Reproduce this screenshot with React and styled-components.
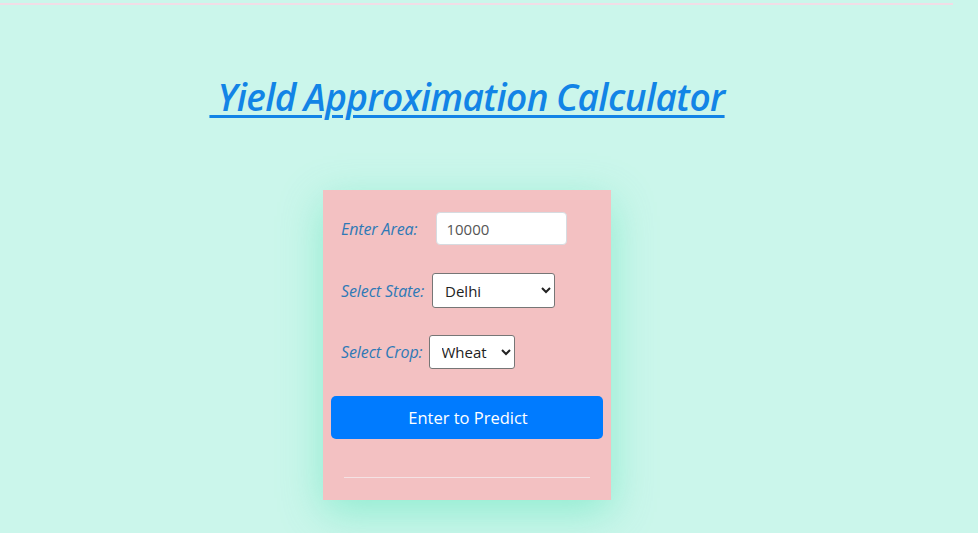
import React, { useState } from "react";
import styled, { createGlobalStyle } from "styled-components";

const GlobalStyle = createGlobalStyle`
  html, body {
    margin: 0;
    padding: 0;
    background: #cbf6eb;
  }
  body {
    font-family: "Open Sans", "Liberation Sans", sans-serif;
  }
`;

const Page = styled.div`
  width: 978px;
  height: 533px;
  background: #cbf6eb;
  overflow: hidden;
`;

const TopRule = styled.div`
  width: 953px;
  height: 2px;
  margin-top: 3px;
  background: #f1dde6;
`;

const Main = styled.main`
  width: 934px;
  display: flex;
  flex-direction: column;
  align-items: center;
`;

const Title = styled.h1`
  margin: 70px 0 0;
  font-family: "Open Sans", "Liberation Sans", sans-serif;
  font-style: italic;
  font-weight: 600;
  font-size: 37px;
  line-height: 44px;
  letter-spacing: -0.6px;
  word-spacing: -1px;
  color: #1284e6;
  text-decoration: underline;
  text-decoration-thickness: 3px;
  text-underline-offset: 4px;
  white-space: pre;
`;

const Card = styled.form`
  margin-top: 71px;
  width: 288px;
  box-sizing: border-box;
  background: #f3c1c2;
  padding: 22px 8px 22px;
  box-shadow: 0 12px 40px rgba(70, 225, 175, 0.45);
`;

const Row = styled.div`
  display: flex;
  align-items: center;
  gap: ${(p) => p.gap}px;
  padding-left: 10px;
  margin-bottom: ${(p) => p.mb}px;
`;

const Label = styled.label`
  font-family: "Open Sans", "Liberation Sans", sans-serif;
  font-style: italic;
  font-size: 16px;
  letter-spacing: -0.1px;
  color: #2e79b6;
`;

const TextInput = styled.input`
  width: 131px;
  height: 33px;
  box-sizing: border-box;
  border: 1px solid #d6dbe0;
  border-radius: 4px;
  padding: 0 9px;
  font-family: "Open Sans", "Liberation Sans", sans-serif;
  font-size: 15px;
  color: #555;
  background: #fff;
  outline: none;
`;

const Select = styled.select`
  width: ${(p) => p.w}px;
  height: ${(p) => p.h}px;
  box-sizing: border-box;
  border: 1px solid #767676;
  border-radius: 3px;
  padding: 0 8px;
  font-family: "Open Sans", "Liberation Sans", sans-serif;
  font-size: 15px;
  color: #222;
  background: #fff;
`;

const Button = styled.button`
  display: block;
  width: 100%;
  height: 43px;
  margin-top: 27px;
  border: none;
  border-radius: 5px;
  background: #007bff;
  color: #fff;
  font-family: "Open Sans", "Liberation Sans", sans-serif;
  font-weight: 500;
  font-size: 16.5px;
  padding-left: 8px;
  cursor: pointer;
`;

const Divider = styled.hr`
  margin: 38px 13px 0;
  border: none;
  border-top: 1px solid #f4e2e4;
`;

const states = ["Delhi", "Punjab", "Haryana", "Bihar", "Kerala"];
const crops = ["Wheat", "Rice", "Maize"];

export default function App() {
  const [area, setArea] = useState("10000");
  const [state, setState] = useState("Delhi");
  const [crop, setCrop] = useState("Wheat");

  return (
    <Page>
      <GlobalStyle />
      <TopRule />
      <Main>
        <Title> Yield Approximation Calculator</Title>
        <Card onSubmit={(e) => e.preventDefault()}>
          <Row gap={19} mb={28}>
            <Label>Enter Area:</Label>
            <TextInput value={area} onChange={(e) => setArea(e.target.value)} />
          </Row>
          <Row gap={8} mb={27}>
            <Label>Select State:</Label>
            <Select w={123} h={35} value={state} onChange={(e) => setState(e.target.value)}>
              {states.map((s) => (
                <option key={s}>{s}</option>
              ))}
            </Select>
          </Row>
          <Row gap={6} mb={0}>
            <Label>Select Crop:</Label>
            <Select w={86} h={34} value={crop} onChange={(e) => setCrop(e.target.value)}>
              {crops.map((c) => (
                <option key={c}>{c}</option>
              ))}
            </Select>
          </Row>
          <Button type="submit">Enter to Predict</Button>
          <Divider />
        </Card>
      </Main>
    </Page>
  );
}
